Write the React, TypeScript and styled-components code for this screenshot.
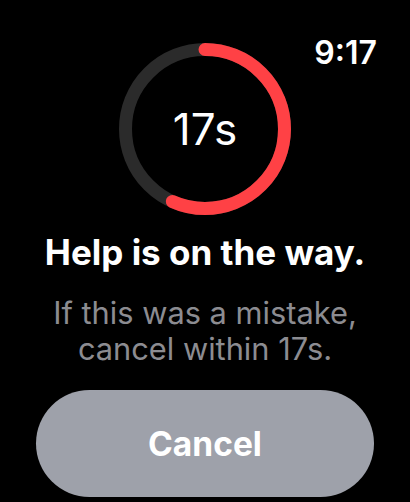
import { FunctionComponent } from 'react'
import styled, { createGlobalStyle } from 'styled-components'

const GlobalStyle = createGlobalStyle`
  html, body {
    margin: 0;
    padding: 0;
    background: #000;
  }
  body {
    font-family: Inter, "Noto Sans", "Liberation Sans", sans-serif;
    -webkit-font-smoothing: antialiased;
  }
`

const Screen = styled.main`
  position: relative;
  width: 410px;
  height: 502px;
  overflow: hidden;
  background: #000;
  color: #fff;
  display: flex;
  flex-direction: column;
  align-items: center;
`

const Clock = styled.time`
  position: absolute;
  top: 37px;
  right: 33px;
  font-size: 32px;
  line-height: 32px;
  font-weight: 600;
`

const RingWrap = styled.div`
  margin-top: 42px;
  width: 174px;
  height: 174px;
  display: grid;
  place-items: center;

  & > * {
    grid-area: 1 / 1;
  }
`

const Seconds = styled.span`
  font-size: 44px;
  line-height: 44px;
  font-weight: 400;
`

const Title = styled.h1`
  margin: 16px 0 0;
  font-size: 35px;
  line-height: 40px;
  font-weight: 700;
  text-align: center;
`

const Message = styled.p`
  margin: 23px 0 0;
  font-size: 30.8px;
  line-height: 36px;
  font-weight: 400;
  color: #8c8c91;
  text-align: center;
`

const CancelButton = styled.button`
  margin-top: 23px;
  width: 338px;
  height: 107px;
  border: 0;
  border-radius: 54px;
  background: #9ea1aa;
  color: #fff;
  font-family: inherit;
  font-size: 33.5px;
  font-weight: 700;
  cursor: pointer;
`

const total = 30
const left = 17

const Countdown: FunctionComponent<{ remaining: number }> = ({ remaining }) => {
  const r = 79.5
  const c = 2 * Math.PI * r
  const dash = (remaining / total) * c
  return (
    <RingWrap>
      <svg width="174" height="174" viewBox="0 0 174 174">
        <circle cx="87" cy="87" r={r} fill="none" stroke="#2b2b2b" strokeWidth="13" />
        <circle
          cx="87"
          cy="87"
          r={r}
          fill="none"
          stroke="#ff4145"
          strokeWidth="13"
          strokeLinecap="round"
          strokeDasharray={`${dash} ${c}`}
          transform="rotate(-90 87 87)"
        />
      </svg>
      <Seconds>{remaining}s</Seconds>
    </RingWrap>
  )
}

const App: FunctionComponent = () => {
  return (
    <>
      <GlobalStyle />
      <Screen>
        <Clock>9:17</Clock>
        <Countdown remaining={left} />
        <Title>Help is on the way.</Title>
        <Message>
          If this was a mistake,
          <br />
          cancel within {left}s.
        </Message>
        <CancelButton>Cancel</CancelButton>
      </Screen>
    </>
  )
}

export default App
